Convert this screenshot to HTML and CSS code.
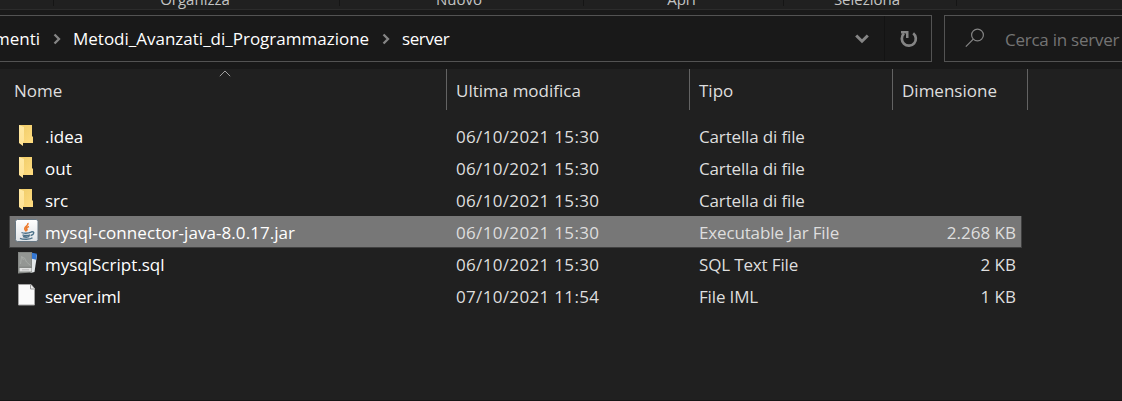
FILE: index.html
```
<!DOCTYPE html>
<html lang="it">
<head>
<meta charset="utf-8">
<title>server</title>
<link rel="stylesheet" href="styles.css">
</head>
<body>
<svg class="defs" width="0" height="0">
  <defs>
    <linearGradient id="fold" x1="0" y1="0" x2="1" y2="1"><stop offset="0" stop-color="#efcc69"/><stop offset="1" stop-color="#ffdc80"/></linearGradient>
    <linearGradient id="flap" x1="0" y1="0" x2="0" y2="1"><stop offset="0" stop-color="#ffe9a4"/><stop offset="1" stop-color="#ffe294"/></linearGradient>
    <linearGradient id="tile" x1="0" y1="0" x2="0" y2="1"><stop offset="0" stop-color="#ffffff"/><stop offset="1" stop-color="#dfe3e7"/></linearGradient>
    <symbol id="folder" viewBox="0 0 24 24"><path d="M5 1h13v11l1 1v6H5z" fill="url(#fold)"/><path d="M5 1l5 2v14l-1 1v4l-4-3z" fill="url(#flap)"/></symbol>
  </defs>
</svg>
<div class="window">
  <div class="ribbon">
    <div class="group g0"></div>
    <div class="group g1"><span>Organizza</span></div>
    <div class="group g2"><span>Nuovo</span></div>
    <div class="group g3"><span>Apri</span></div>
    <div class="group g4"><span>Seleziona</span></div>
  </div>
  <div class="toolbar">
    <div class="address">
      <span class="crumb first">Documenti</span>
      <svg class="sep" width="8" height="12" viewBox="0 0 8 12"><path d="M1.500 1.500L6 6l-4.500 4.500"/></svg>
      <span class="crumb project">Metodi_Avanzati_di_Programmazione</span>
      <svg class="sep" width="8" height="12" viewBox="0 0 8 12"><path d="M1.500 1.500L6 6l-4.500 4.500"/></svg>
      <span class="crumb last">server</span>
      <svg class="down" width="14" height="10" viewBox="0 0 14 10"><path d="M1.200 1.500L7 7.200l5.800-5.700"/></svg>
      <div class="refresh"><svg width="18" height="18" viewBox="0 0 18 18"><path d="M13.200 3.200A7 7 0 1 1 4 3.600" fill="none" stroke="#858585" stroke-width="2.700"/><path d="M1 1h7.500v7H6V3.500H1z" fill="#858585"/></svg></div>
    </div>
    <div class="search">
      <svg width="20" height="20" viewBox="0 0 20 20"><circle cx="12.500" cy="7" r="5.900"/><path d="M8.300 11.200L.8 18.700"/></svg>
      <span>Cerca in server</span>
    </div>
  </div>
  <div class="row head">
    <div class="name">Nome<svg class="sort" width="12" height="7" viewBox="0 0 12 7"><path d="M.8 6.200L6 1l5.200 5.200"/></svg></div>
    <div class="date">Ultima modifica</div><div class="type">Tipo</div><div class="size">Dimensione</div>
  </div>
  <div class="list">
    <div class="row"><div class="name"><svg class="ico" viewBox="0 0 24 24"><use href="#folder"/></svg><span>.idea</span></div><div class="date">06/10/2021 15:30</div><div class="type">Cartella di file</div><div class="size"></div></div>
    <div class="row"><div class="name"><svg class="ico" viewBox="0 0 24 24"><use href="#folder"/></svg><span>out</span></div><div class="date">06/10/2021 15:30</div><div class="type">Cartella di file</div><div class="size"></div></div>
    <div class="row"><div class="name"><svg class="ico" viewBox="0 0 24 24"><use href="#folder"/></svg><span>src</span></div><div class="date">06/10/2021 15:30</div><div class="type">Cartella di file</div><div class="size"></div></div>
    <div class="row selected"><div class="name"><svg class="ico" viewBox="0 0 24 24"><rect x="1.500" y="-.5" width="22.500" height="22" rx="2" fill="url(#tile)" stroke="#687884"/><path d="M14 3c.5 3-4.500 3.800-3 6.500.5 1 1 1.500 1 2M15 6.500c-3 1-3 2.500-1.500 4" fill="none" stroke="#ed7a2c" stroke-width="1.600"/><path d="M7.500 12.500c1.500 1 7 1 9.500-.3M8.500 14.800c2 1 6 1 7.500 0M9 16.500c2 .8 5 .8 6.500 0M6 18.300c3 1.500 10.500 1.200 12.500-.5M17 12c4-1 3.500 2.500-.3 3.500" fill="none" stroke="#4c7188" stroke-width="1.400"/></svg><span class="jar">mysql-connector-java-8.0.17.jar</span></div><div class="date">06/10/2021 15:30</div><div class="type">Executable Jar File</div><div class="size">2.268 KB</div></div>
    <div class="row"><div class="name"><svg class="ico" viewBox="0 0 24 24"><path d="M16 2l7 1-2.500 17-4 1z" fill="#e4e8ea"/><path d="M18 .8l5 1-.8 6-4.200-1z" fill="#3478d5"/><path d="M4 0h14v20.500l-14 1z" fill="#858885"/><path d="M5 1h12v13.500H5z" fill="#939693"/><path d="M6.500 12l1-7 3 1 2 4 4 3.500M7.500 4l2 4" fill="none" stroke="#aaadaa" stroke-width=".8"/><path d="M5.500 16h12v3.500h-12z" fill="#dfe0df"/><path d="M8 17.800h7" stroke="#b7b7b7"/></svg><span>mysqlScript.sql</span></div><div class="date">06/10/2021 15:30</div><div class="type">SQL Text File</div><div class="size">2 KB</div></div>
    <div class="row"><div class="name"><svg class="ico" viewBox="0 0 24 24"><path d="M4.500.5H17l3.500 4v16.500h-16z" fill="#fafafa" stroke="#a4a4a4"/><path d="M16.500.5v4.500h4" fill="#eee" stroke="#999"/></svg><span class="iml">server.iml</span></div><div class="date">07/10/2021 11:54</div><div class="type">File IML</div><div class="size">1 KB</div></div>
  </div>
</div>
</body>
</html>
```
FILE: styles.css
```
* { box-sizing: border-box; }
body { margin: 0; background: #202020; font: 17px/32px "Open Sans", "Noto Sans", sans-serif; color: #dedede; }
.defs { position: absolute; }
.window { width: 1122px; height: 401px; overflow: hidden; border-bottom: 1px solid #151515; display: flex; flex-direction: column; white-space: nowrap; }
.ribbon { height: 10px; flex: none; display: flex; align-items: flex-start; border-bottom: 1px solid #2c2c2c; overflow: hidden; font-size: 15px; color: #c4c4c4; }
.group { height: 6px; flex: none; border-right: 1px solid #151515; display: flex; justify-content: center; align-items: flex-end; line-height: 16px; }
.group span { height: 15px; }
.g0 { width: 54px; }
.g1 { width: 286px; padding-right: 3px; }
.g2 { width: 244px; padding-right: 5px; }
.g3 { width: 200px; padding-right: 4px; }
.g4 { width: 173px; padding-right: 6px; }
.toolbar { height: 59px; flex: none; background: #191919; padding-top: 5px; display: flex; gap: 12px; }
.address { width: 932px; height: 47px; flex: none; border: 1px solid #535353; border-left: 0; display: flex; align-items: center; color: #fff; }
.crumb { flex: none; line-height: 44px; }
.first { width: 40px; display: flex; justify-content: flex-end; overflow: hidden; }
.sep { margin: 1px 12px 0 13px; fill: none; stroke: #858585; stroke-width: 2.3; flex: none; }
.project { width: 296px; }
.last { flex: 1; letter-spacing: -.4px; }
.down { fill: none; stroke: #858585; stroke-width: 3; margin-right: 15px; }
.refresh { width: 47px; height: 45px; border-left: 1px solid #131313; display: flex; align-items: center; justify-content: center; padding-left: 1px; }
.search { width: 178px; height: 47px; border: 1px solid #535353; border-right: 0; display: flex; align-items: center; padding-left: 20px; gap: 20px; color: #747474; line-height: 46px; overflow: hidden; }
.search span { letter-spacing: -.25px; padding-top: 2px; }
.search svg { fill: none; stroke: #858585; stroke-width: 1.2; flex: none; margin-bottom: 2px; }
.row { display: grid; grid-template-columns: 446px 243px 203px 136px; grid-template-rows: 100%; height: 32px; }
.head { height: 41px; flex: none; line-height: 43px; }
.head .name { padding-left: 14px; }
.head .date, .head .type, .head .size { border-left: 1px solid #636363; padding-left: 9px; text-align: left; }
.head .size { border-right: 1px solid #636363; padding-right: 0; }
.name { position: relative; }
.sort { position: absolute; left: 219px; top: 1px; fill: none; stroke: #a0a0a0; }
.list { padding-top: 10px; }
.list .row { line-height: 34px; }
.list .name { display: flex; color: #fff; padding-left: 14px; gap: 7px; }
.ico { width: 24px; height: 24px; margin-top: 4px; flex: none; overflow: visible; }
.date, .type { padding-left: 10px; }
.list .date { letter-spacing: .33px; }
.list .type { letter-spacing: -.15px; }
.jar { letter-spacing: .06px; }
.iml { letter-spacing: -.3px; }
.size { text-align: right; padding-right: 12px; }
.selected { background: linear-gradient(#777, #777) 10px 0 / 1011px 31px no-repeat, linear-gradient(#404040, #404040) 9px 0 / 1013px 32px no-repeat; }
```
